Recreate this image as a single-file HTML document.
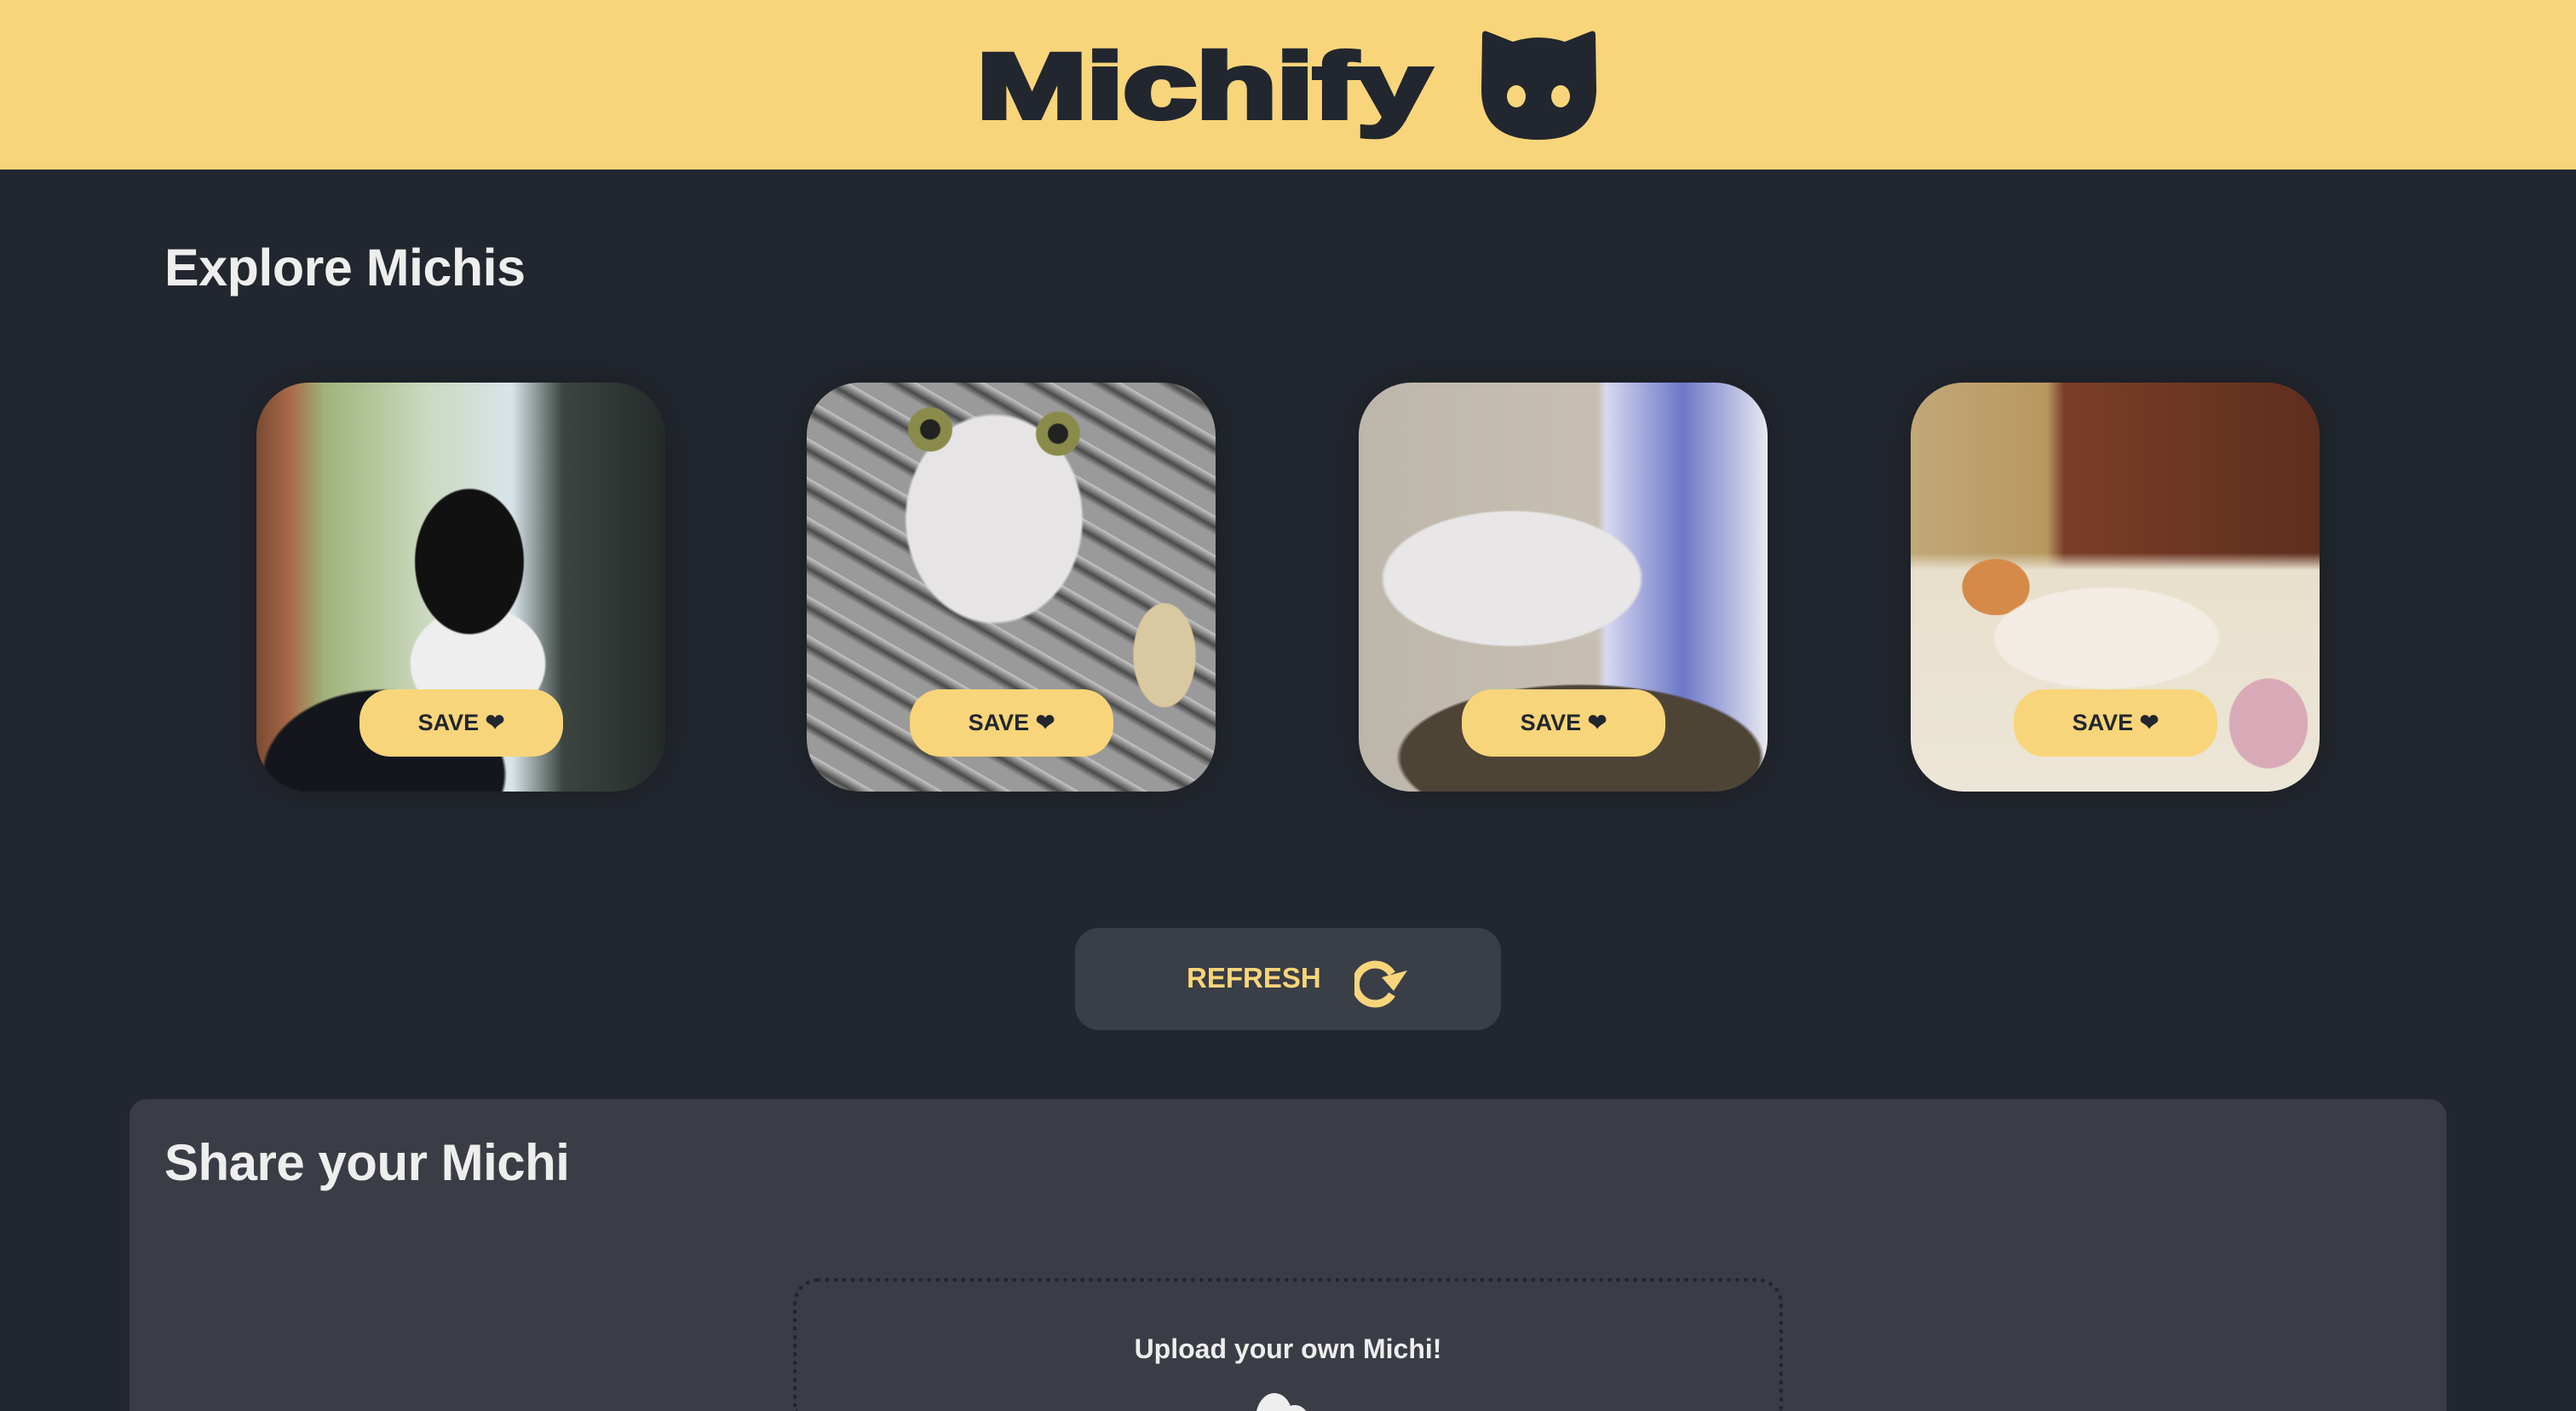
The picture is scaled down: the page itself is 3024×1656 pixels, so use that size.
<!DOCTYPE html>
<html style="overflow:hidden;width:3024px;height:1656px"><head><meta charset="utf-8"><style>
*{margin:0;padding:0;box-sizing:border-box}
body{width:3024px;height:1656px;overflow:hidden;background:#22262e;font-family:"Liberation Sans",sans-serif;position:relative}
.hdr{position:absolute;left:0;top:0;width:3024px;height:199px;background:#f8d57a}
h2{position:absolute;color:#eeeeee;font-weight:bold;font-size:60px;letter-spacing:-0.5px}
.card{position:absolute;top:449px;width:480px;height:480px;border-radius:62px;overflow:hidden;box-shadow:0 0 40px rgba(0,0,0,0.25)}
.save{position:absolute;left:121px;top:360px;width:239px;height:79px;border-radius:36px;background:#f8d57a;color:#22262e;font-weight:bold;font-size:27px;display:flex;align-items:center;justify-content:center}
.ref{position:absolute;left:1262px;top:1089px;width:500px;height:120px;border-radius:28px;background:#3a3e46;color:#f8d57a;font-weight:bold;font-size:33px}
.share{position:absolute;left:152px;top:1290px;width:2720px;height:366px;border-radius:20px 20px 0 0;background:#3a3d45;overflow:hidden}
.up{position:absolute;left:779px;top:210px;width:1162px;height:156px;border:5px dotted #22262e;border-bottom:none;border-radius:30px 30px 0 0;overflow:hidden}
</style></head><body>
<div class="hdr">
<svg width="3024" height="199" style="position:absolute;left:0;top:0">
<text x="1147" y="138" font-family="Liberation Sans" font-weight="bold" font-size="108" textLength="532" lengthAdjust="spacingAndGlyphs" fill="#22262e" stroke="#22262e" stroke-width="6">Michify</text>
<g transform="translate(1736,35)">
<path d="M4 6 Q4 0 10 2 L40 14 Q70 4 101 14 L131 2 Q137 0 137 6 L138 72 Q136 129 70 129 Q4 129 3 72 Z" fill="#22262e"/>
<ellipse cx="44" cy="78" rx="11" ry="13" fill="#f8d57a"/>
<ellipse cx="96" cy="78" rx="11" ry="13" fill="#f8d57a"/>
</g>
</svg>
</div>
<h2 style="left:193px;top:279px;font-size:61px">Explore Michis</h2>

<div class="card" style="left:301px;background:
radial-gradient(ellipse 90px 120px at 250px 210px,#111 70%,transparent 72%),
radial-gradient(ellipse 130px 110px at 260px 330px,#eee 60%,transparent 62%),
radial-gradient(ellipse 200px 140px at 150px 460px,#15161c 70%,transparent 72%),
linear-gradient(90deg,#7a4a32 0,#a86a48 40px,#9fb37a 80px,#cbd9c0 200px,#d8e4ea 300px,#3c4540 360px,#242a2a 480px)">
<div class="save">SAVE ❤</div></div>

<div class="card" style="left:947px;background:
radial-gradient(circle 28px at 145px 55px,#222 40%,#8a8a4a 45%,#8a8a4a 90%,transparent 95%),
radial-gradient(circle 28px at 295px 60px,#222 40%,#8a8a4a 45%,#8a8a4a 90%,transparent 95%),
radial-gradient(ellipse 170px 200px at 220px 160px,#e6e4e4 60%,transparent 62%),
radial-gradient(ellipse 60px 100px at 420px 320px,#d9c9a0 60%,transparent 62%),
repeating-linear-gradient(30deg,#9a9a9a 0,#9a9a9a 20px,#4a4a4a 28px,#c8c8c8 40px),
linear-gradient(90deg,transparent 340px,#c99a5c 340px)">
<div class="save">SAVE ❤</div></div>

<div class="card" style="left:1595px;background:
radial-gradient(ellipse 230px 120px at 180px 230px,#e8e6e6 65%,transparent 67%),
radial-gradient(ellipse 300px 120px at 260px 440px,#4e4436 70%,transparent 72%),
linear-gradient(90deg,#bdb6aa 0,#c6bfb2 280px,#d8d8f0 290px,#6b78c8 380px,#e8e8f0 480px)">
<div class="save">SAVE ❤</div></div>

<div class="card" style="left:2243px;background:
radial-gradient(ellipse 200px 90px at 230px 300px,#f2ece4 65%,transparent 67%),
radial-gradient(ellipse 60px 50px at 100px 240px,#d58a4a 65%,transparent 67%),
radial-gradient(ellipse 70px 80px at 420px 400px,#d8aab8 65%,transparent 67%),
linear-gradient(180deg,transparent 0,transparent 200px,#e8e0cc 220px,#ece6d8 480px),
linear-gradient(90deg,#c0a878 0,#b89860 160px,#7a3e28 180px,#5e2e1e 480px)">
<div class="save">SAVE ❤</div></div>

<div class="ref">
<span style="position:absolute;left:131px;top:40px">REFRESH</span>
<svg width="70" height="60" style="position:absolute;left:328px;top:34px" viewBox="0 0 70 60">
<path d="M44 20 A23 23 0 1 0 44 44" fill="none" stroke="#f8d57a" stroke-width="9"/>
<path d="M32 24 L62 16 L46 40 Z" fill="#f8d57a"/>
</svg>
</div>

<div class="share">
<h2 style="left:41px;top:40px">Share your Michi</h2>
<div class="up">
<div style="position:absolute;left:0;right:0;top:60px;text-align:center;color:#eee;font-weight:bold;font-size:32px">Upload your own Michi!</div>
<svg width="100" height="40" style="position:absolute;left:520px;top:120px"><ellipse cx="40" cy="40" rx="22" ry="30" fill="#eee"/><ellipse cx="64" cy="46" rx="18" ry="22" fill="#eee"/></svg>
</div>
</div>
</body></html>
